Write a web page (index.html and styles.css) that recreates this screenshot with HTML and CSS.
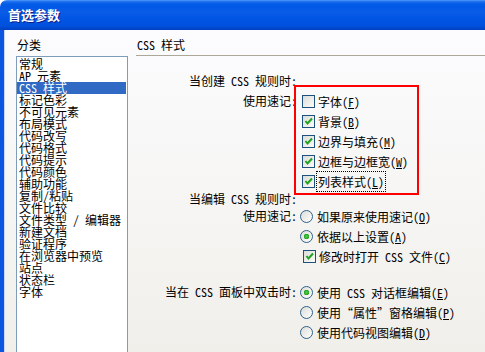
FILE: index.html
```html
<!DOCTYPE html>
<html lang="zh-CN">

<head>
    <meta charset="UTF-8">
    <title>首选参数</title>
    <link rel="stylesheet" href="styles.css">
</head>

<body>
    <div class="window">
        <!-- 标题栏 -->
        <div class="titleBar">首选参数</div>
        <div class="frame">
            <!-- 左侧分类 -->
            <div class="sideNode">
                <div class="caption">分类</div>
                <ul class="listBox">
                    <li>常规</li>
                    <li>AP 元素</li>
                    <li class="active">CSS 样式</li>
                    <li>标记色彩</li>
                    <li>不可见元素</li>
                    <li>布局模式</li>
                    <li>代码改写</li>
                    <li>代码格式</li>
                    <li>代码提示</li>
                    <li>代码颜色</li>
                    <li>辅助功能</li>
                    <li>复制/粘贴</li>
                    <li>文件比较</li>
                    <li>文件类型 / 编辑器</li>
                    <li>新建文档</li>
                    <li>验证程序</li>
                    <li>在浏览器中预览</li>
                    <li>站点</li>
                    <li>状态栏</li>
                    <li>字体</li>
                </ul>
            </div>
            <!-- 右侧面板 -->
            <div class="mainNode">
                <div class="panelTitle">CSS 样式</div>
                <div class="form">
                    <div class="heading first">当创建 CSS 规则时:</div>
                    <div class="row markedRow">
                        <div class="label">使用速记:</div>
                        <div class="opts marked">
                            <div class="opt"><span class="check"></span><span>字体(<u>F</u>)</span></div>
                            <div class="opt"><span class="check on"></span><span>背景(<u>B</u>)</span></div>
                            <div class="opt"><span class="check on"></span><span>边界与填充(<u>M</u>)</span></div>
                            <div class="opt"><span class="check on"></span><span>边框与边框宽(<u>W</u>)</span></div>
                            <div class="opt"><span class="check on"></span><span class="focus">列表样式(<u>L</u>)</span></div>
                        </div>
                    </div>

                    <div class="heading second">当编辑 CSS 规则时:</div>
                    <div class="row">
                        <div class="label">使用速记:</div>
                        <div class="opts">
                            <div class="opt"><span class="radio"></span><span>如果原来使用速记(<u>O</u>)</span></div>
                            <div class="opt"><span class="radio on"></span><span>依据以上设置(<u>A</u>)</span></div>
                            <div class="opt indent"><span class="check on"></span><span>修改时打开 CSS 文件(<u>C</u>)</span></div>
                        </div>
                    </div>

                    <div class="row third">
                        <div class="label">当在 CSS 面板中双击时:</div>
                        <div class="opts">
                            <div class="opt"><span class="radio on"></span><span>使用 CSS 对话框编辑(<u>E</u>)</span></div>
                            <div class="opt"><span class="radio"></span><span>使用“属性”窗格编辑(<u>P</u>)</span></div>
                            <div class="opt"><span class="radio"></span><span>使用代码视图编辑(<u>D</u>)</span></div>
                        </div>
                    </div>
                </div>
            </div>
        </div>
    </div>
</body>

</html>
```

FILE: styles.css
```css
* {
    margin: 0;
    padding: 0;
    list-style: none;
    box-sizing: border-box;
}

body {
    font-family: "Noto Sans Mono CJK SC", "Noto Sans CJK SC", sans-serif;
    font-size: 12px;
    color: #000;
    overflow: hidden;
}

.window {
    width: 485px;
    height: 352px;
    display: flex;
    flex-direction: column;
    overflow: hidden;
}

.titleBar {
    height: 30px;
    flex: none;
    padding-left: 8px;
    line-height: 30px;
    font-size: 13px;
    font-weight: bold;
    color: #fff;
    text-shadow: 1px 1px 0 #0a1e8c;
    border-top-left-radius: 7px;
    background: linear-gradient(to bottom, #5aa0ff 0, #2a7af2 1px, #0a60e8 3px, #0058e6 6px, #0a5ce6 12px, #0054e3 20px, #0050dc 26px, #0040c0 30px);
}

.frame {
    flex: 1;
    display: flex;
    gap: 8px;
    padding: 8px 0 0 12px;
    border-left: 4px solid #0b55e0;
    box-shadow: inset 1px 0 0 #c9d8f6;
    background: linear-gradient(to bottom, #fcfcfe, #f0efea);
    overflow: hidden;
}

.sideNode {
    width: 112px;
    display: flex;
    flex-direction: column;
}

.caption {
    line-height: 14px;
    padding-left: 1px;
}

.listBox {
    margin-top: 4px;
    height: 300px;
    flex: none;
    padding: 1px 1px 0 0;
    border: 1px solid #7f9db9;
    background: #fff;
}

.listBox li {
    height: 12px;
    line-height: 12px;
    padding-left: 2px;
    white-space: nowrap;
}

.listBox li.active {
    background: #316ac5;
    color: #fff;
}

.mainNode {
    flex: 1;
}

.panelTitle {
    line-height: 14px;
    padding: 0 0 3px 1px;
    border-bottom: 1px solid #aca899;
}

.heading {
    width: 161px;
    line-height: 12px;
    text-align: right;
    white-space: nowrap;
}

.heading.first {
    margin-top: 19px;
}

.heading.second {
    margin-top: -2px;
}

.row {
    display: flex;
    gap: 3px;
    margin-top: 1px;
}

.row.markedRow {
    margin-top: -2px;
}

.row.third {
    margin-top: 16px;
}

.label {
    width: 161px;
    line-height: 20px;
    text-align: right;
    white-space: nowrap;
}

.markedRow .label {
    padding-top: 6px;
}

.opts.marked {
    width: 125px;
    margin-left: -6px;
    padding: 4px 0 2px 6px;
    border: 2px solid #ff0000;
}

.opt {
    height: 20px;
    display: flex;
    align-items: center;
    gap: 4px;
    white-space: nowrap;
}

.marked .opt {
    gap: 3px;
}

.opt.indent {
    padding-left: 3px;
    gap: 3px;
}

.focus {
    outline: 1px dotted #000;
    outline-offset: 1px;
}

.check {
    width: 13px;
    height: 13px;
    flex: none;
    border: 1px solid #1c5180;
    background: linear-gradient(135deg, #dcdcd7, #fbfbf9);
}

.check.on {
    background: url("data:image/svg+xml,%3Csvg xmlns='http://www.w3.org/2000/svg' width='11' height='11'%3E%3Cpath d='M2.5 5 L4.5 7.5 L9 2.5' fill='none' stroke='%2321a121' stroke-width='2'/%3E%3C/svg%3E") no-repeat, linear-gradient(135deg, #dcdcd7, #fbfbf9);
}

.radio {
    width: 13px;
    height: 13px;
    flex: none;
    border-radius: 50%;
    border: 1px solid #2c628b;
    background: linear-gradient(135deg, #dcdcd7, #ffffff);
}

.radio.on {
    background: radial-gradient(circle at 50% 50%, #55d451 0, #21a121 2.5px, transparent 3px), linear-gradient(135deg, #dcdcd7, #ffffff);
}

u {
    text-decoration: underline;
}
```
